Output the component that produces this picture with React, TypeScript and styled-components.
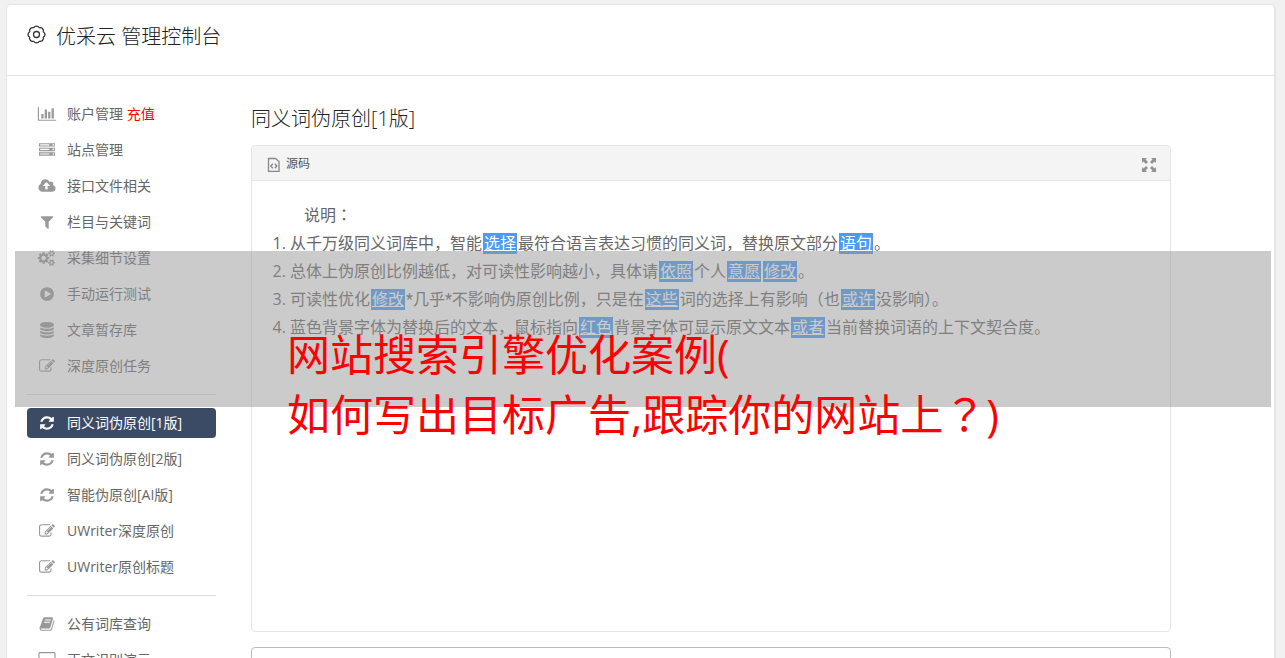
import React from "react";
import styled, { createGlobalStyle, css } from "styled-components";

const latinFirst = '"Open Sans", "Noto Sans CJK SC", sans-serif';

const GlobalStyle = createGlobalStyle`
  *, *::before, *::after { box-sizing: border-box; }
  html, body { margin: 0; height: 100%; }
  body {
    background: #f1f1f1;
    color: #555;
    font-family: ${latinFirst};
    font-size: 14px;
    overflow: hidden;
  }
  #root { height: 100%; }
`;

const Page = styled.div`
  position: relative;
  min-height: 100%;
  padding: 4px 9px 0 6px;
`;

const Card = styled.div`
  background: #fff;
  border: 1px solid #e5e5e5;
  border-right-width: 2px;
  border-bottom: 0;
  border-radius: 5px 5px 0 0;
`;

const Header = styled.header`
  display: flex;
  align-items: flex-start;
  gap: 10px;
  height: 71px;
  padding: 16px 20px;
  border-bottom: 1px solid #e5e5e5;
  color: #222;
`;

const HeaderTitle = styled.h1`
  margin: 0;
  font-size: 20px;
  line-height: 32px;
  font-weight: 300;
`;

const GearIcon = styled.svg`
  width: 19px;
  height: 19px;
  margin-top: 4px;
  fill: none;
  stroke: #333;
`;

const Body = styled.div`
  display: flex;
  align-items: flex-start;
  gap: 35px;
  padding: 23px 20px 0;
`;

const Sidebar = styled.nav`
  flex: 0 0 189px;
`;

const NavList = styled.ul`
  list-style: none;
  margin: 0;
  padding: 0;
  display: flex;
  flex-direction: column;
  gap: 6px;

  & + & {
    margin-top: 13px;
    padding-top: 13px;
    border-top: 1px solid #ddd;
  }
`;

const NavLink = styled.a<{ $active?: boolean }>`
  display: flex;
  align-items: center;
  height: 30px;
  border-radius: 4px;
  padding-left: 10px;
  gap: 10px;
  color: #666;
  font-size: 14px;
  line-height: 30px;
  text-decoration: none;
  white-space: nowrap;
  ${(p) =>
    p.$active &&
    css`
      background: #3b4b66;
      color: #fff;
    `}
`;

const NavIcon = styled.svg<{ $active?: boolean }>`
  flex: 0 0 20px;
  height: 16px;
  fill: ${(p) => (p.$active ? "#fff" : "#999")};
`;

const Recharge = styled.span`
  color: #f00;
`;

const Main = styled.main`
  flex: 0 1 920px;
  min-width: 0;
`;

const PageTitle = styled.h2`
  margin: 5px 0 11px;
  color: #222;
  font-size: 20px;
  line-height: 30px;
  font-weight: 300;
`;

const Editor = styled.section`
  border: 1px solid #e5e5e5;
  border-radius: 4px;
`;

const Toolbar = styled.div`
  display: flex;
  justify-content: space-between;
  align-items: center;
  height: 35px;
  padding: 2px 13px 0 15px;
  border-bottom: 1px solid #e5e5e5;
  border-radius: 4px 4px 0 0;
  background: #f4f4f4;
`;

const ToolButton = styled.button`
  display: flex;
  align-items: center;
  gap: 5px;
  padding: 0;
  border: 0;
  background: none;
  color: #555;
  font-family: ${latinFirst};
  font-size: 12px;
  line-height: 20px;
`;

const ToolIcon = styled.svg`
  width: 14px;
  height: 16px;
  fill: none;
  stroke: #888;
`;

const ExpandIcon = styled.svg`
  width: 16px;
  height: 16px;
  fill: #919191;
`;

const EditorText = styled.div`
  min-height: 450px;
  padding: 20px;
  color: #666;
  font-size: 16px;
  line-height: 28px;
`;

const Intro = styled.p`
  margin: 0;
  text-indent: 32px;
`;

const Rules = styled.ol`
  margin: 0;
  padding-left: 18px;
`;

const Swap = styled.span`
  display: inline-block;
  margin: 0 1px;
  padding: 0 1px;
  line-height: 21px;
  background: #4a9bf5;
  color: #fff;
  text-decoration: underline;
`;

const CenteredMark = styled.span`
  font-family: "Noto Sans CJK JP", sans-serif;
  line-height: 1;
`;

const Star = styled.span`
  font-family: Roboto, sans-serif;
  line-height: 1;
`;

const Result = styled.textarea`
  display: block;
  width: 100%;
  height: 120px;
  margin-top: 15px;
  border: 1px solid #bbb;
  border-radius: 4px;
  background: #fff;
  resize: none;
`;

const Banner = styled.div`
  position: absolute;
  top: 251px;
  left: 15px;
  right: 14px;
  height: 156px;
  padding: 74px 0 0 272px;
  background: rgba(151, 151, 151, 0.5);
  color: #f00;
  font-size: 43px;
  line-height: 60px;
  white-space: nowrap;
`;

type Glyph = { box: string; d: string };

const smallCog = (y: number) =>
  `M1856 ${y}v140q0 16-149 31-12 27-30 52 51 113 51 138 0 4-4 7-122 71-124 71-8 0-46-47t-52-68q-20 2-30 2t-30-2q-14 21-52 68t-46 47q-2 0-124-71-4-3-4-7 0-25 51-138-18-25-30-52-149-15-149-31v-140q0-16 149-31 13-29 30-52-51-113-51-138 0-4 4-7 4-2 35-20t59-34 30-16q8 0 46 46.500t52 67.500q20-2 30-2t30 2q51-71 92-112l6-2q4 0 124 70 4 3 4 7 0 25-51 138 17 23 30 52 149 15 149 31z`;

const glyphs: Record<string, Glyph> = {
  chart: {
    box: "0 0 2048 1792",
    d: "M640 896v512h-256v-512h256zM1024 384v1024h-256v-1024h256zM2048 1536v128h-2048v-1536h128v1408h1920zM1408 640v768h-256v-768h256zM1792 256v1152h-256v-1152h256z",
  },
  server: {
    box: "0 0 1792 1792",
    d: "M128 1408h1024v-128h-1024v128zm0-512h1024v-128h-1024v128zm1568 448q0-40-28-68t-68-28-68 28-28 68 28 68 68 28 68-28 28-68zm-1568-960h1024v-128h-1024v128zm1568 448q0-40-28-68t-68-28-68 28-28 68 28 68 68 28 68-28 28-68zm0-512q0-40-28-68t-68-28-68 28-28 68 28 68 68 28 68-28 28-68zm96 832v384h-1792v-384h1792zm0-512v384h-1792v-384h1792zm0-512v384h-1792v-384h1792z",
  },
  cloud: {
    box: "0 0 2048 1792",
    d: "M1344 864q0-14-9-23l-352-352q-9-9-23-9t-23 9l-351 351q-10 12-10 24 0 14 9 23t23 9h224v352q0 13 9.500 22.500t22.500 9.500h192q13 0 22.500-9.500t9.500-22.500v-352h224q13 0 22.500-9.500t9.500-22.500zm640 288q0 159-112.500 271.500t-271.500 112.500h-1088q-185 0-316.500-131.500t-131.500-316.500q0-130 70-240t188-165q-2-30-2-43 0-212 150-362t362-150q156 0 285.500 87t188.500 231q71-62 166-62 106 0 181 75t75 181q0 76-41 138 130 31 213.500 135.500t83.500 238.500z",
  },
  filter: {
    box: "0 0 1792 1792",
    d: "M1595 295q17 41-14 70l-493 493v742q0 42-39 59-13 5-25 5-27 0-45-19l-256-256q-19-19-19-45v-486l-493-493q-31-29-14-70 17-39 59-39h1280q42 0 59 39z",
  },
  cogs: {
    box: "-64 0 2048 1792",
    d:
      "M832 896q0-106-75-181t-181-75-181 75-75 181 75 181 181 75 181-75 75-181zm768 512q0-52-38-90t-90-38-90 38-38 90q0 53 37.500 90.500t90.500 37.500 90.500-37.500 37.500-90.500zm0-1024q0-52-38-90t-90-38-90 38-38 90q0 53 37.500 90.500t90.500 37.500 90.500-37.500 37.500-90.500zm-384 421v185q0 10-7 19.500t-16 10.500l-155 24q-11 35-32 76 34 48 90 115 7 11 7 20 0 12-7 19-23 30-82.500 89.500t-78.500 59.500q-11 0-21-7l-115-90q-37 19-77 31-11 108-23 155-7 24-30 24h-186q-11 0-20-7.500t-10-17.500l-23-153q-34-10-75-31l-118 89q-7 7-20 7-11 0-21-8-144-133-144-160 0-9 7-19 10-14 41-53t47-61q-23-44-35-82l-152-24q-10-1-17-9.500t-7-19.500v-185q0-10 7-19.500t16-10.500l155-24q11-35 32-76-34-48-90-115-7-11-7-20 0-12 7-20 22-30 82-89t79-59q11 0 21 7l115 90q34-18 77-32 11-108 23-154 7-24 30-24h186q11 0 20 7.500t10 17.500l23 153q34 10 75 31l118-89q8-7 20-7 11 0 21 8 144 133 144 160 0 8-7 19-12 16-42 54t-45 60q23 48 34 82l152 23q10 2 17 10.500t7 19.500z" +
      smallCog(1338) +
      smallCog(314),
  },
  play: {
    box: "0 0 1792 1792",
    d: "M896 128q209 0 385.500 103t279.500 279.500 103 385.500-103 385.500-279.500 279.500-385.500 103-385.500-103-279.500-279.500-103-385.500 103-385.500 279.500-279.500 385.500-103zm384 823q32-18 32-55t-32-55l-544-320q-31-19-64-1-32 19-32 56v640q0 37 32 56 16 8 32 8 17 0 32-9z",
  },
  database: {
    box: "0 0 1792 1792",
    d: "M896 768q237 0 443-43t325-127v170q0 69-103 128t-280 93.500-385 34.500-385-34.500-280-93.500-103-128v-170q119 84 325 127t443 43zm0 768q237 0 443-43t325-127v170q0 69-103 128t-280 93.500-385 34.500-385-34.500-280-93.500-103-128v-170q119 84 325 127t443 43zm0-384q237 0 443-43t325-127v170q0 69-103 128t-280 93.500-385 34.500-385-34.500-280-93.500-103-128v-170q119 84 325 127t443 43zm0-1152q208 0 385 34.500t280 93.500 103 128v128q0 69-103 128t-280 93.500-385 34.500-385-34.500-280-93.500-103-128v-128q0-69 103-128t280-93.500 385-34.500z",
  },
  edit: {
    box: "0 0 1792 1792",
    d: "M888 1184l116-116-152-152-116 116v56h96v96h56zm440-720q-16-16-33 1l-350 350q-17 17-1 33t33-1l350-350q17-17 1-33zm80 594v190q0 119-84.500 203.500t-203.500 84.500h-832q-119 0-203.500-84.500t-84.500-203.500v-832q0-119 84.500-203.500t203.500-84.500h832q63 0 117 25 15 7 18 23 3 17-9 29l-49 49q-14 14-32 8-23-6-45-6h-832q-66 0-113 47t-47 113v832q0 66 47 113t113 47h832q66 0 113-47t47-113v-126q0-13 9-22l64-64q15-15 35-7t20 29zm-96-738l288 288-672 672h-288v-288zm444 132l-92 92-288-288 92-92q28-28 68-28t68 28l152 152q28 28 28 68t-28 68z",
  },
  refresh: {
    box: "0 0 1792 1792",
    d: "M1639 1056q0 5-1 7-64 268-268 434.500t-478 166.500q-146 0-282.500-55t-243.500-157l-129 129q-19 19-45 19t-45-19-19-45v-448q0-26 19-45t45-19h448q26 0 45 19t19 45-19 45l-137 137q71 66 161 102t187 36q134 0 250-65t186-179q11-17 53-117 8-23 30-23h192q13 0 22.500 9.500t9.500 22.500zm25-800v448q0 26-19 45t-45 19h-448q-26 0-45-19t-19-45 19-45l138-138q-148-137-349-137-134 0-250 65t-186 179q-11 17-53 117-8 23-30 23h-199q-13 0-22.500-9.500t-9.500-22.500v-7q65-268 270-434.500t480-166.500q146 0 284 55.500t245 156.500l130-129q19-19 45-19t45 19 19 45z",
  },
  book: {
    box: "0 0 1792 1792",
    d: "M1703 478q40 57 18 129l-275 906q-19 64-76.500 107.500t-122.500 43.500h-923q-77 0-148.500-53.500t-99.500-131.500q-24-67-2-127 0-4 3-27t4-37q1-8-3-21.500t-3-19.500q2-11 8-21t16.500-23.500 16.500-23.500q23-38 45-91.500t30-91.500q3-10 .5-30t-.5-28q3-11 17-28t17-23q21-36 42-92t25-90q1-9-2.500-32t.5-28q4-13 22-30.500t22-22.500q19-26 42.500-84.500t27.500-96.500q1-8-3-25.500t-2-26.500q2-8 9-18t18-23 17-21q8-12 16.500-30.500t15-35 16-36 19.500-32 26.500-23.500 36-11.500 47.500 5.500l-1 3q38-9 51-9h761q74 0 114 56t18 130l-274 906q-36 119-71.500 153.500t-128.500 34.500h-869q-27 0-38 15-11 16-1 43 24 70 144 70h923q29 0 56-15.500t35-41.500l300-987q7-22 5-57 38 15 59 43zm-1064 2q-4 13 2 22.500t20 9.500h608q13 0 25.500-9.500t16.500-22.500l21-64q4-13-2-22.500t-20-9.500h-608q-13 0-25.500 9.500t-16.500 22.500zm-83 256q-4 13 2 22.500t20 9.500h608q13 0 25.500-9.500t16.500-22.500l21-64q4-13-2-22.500t-20-9.500h-608q-13 0-25.500 9.500t-16.500 22.500z",
  },
  desktop: {
    box: "0 0 1920 1792",
    d: "M1792 992v-832q0-13-9.500-22.500t-22.500-9.500h-1600q-13 0-22.500 9.500t-9.500 22.500v832q0 13 9.500 22.500t22.500 9.500h1600q13 0 22.500-9.500t9.500-22.500zm128-832v1088q0 66-47 113t-113 47h-544q0 37 16 77.500t32 71 16 43.500q0 26-19 45t-45 19h-512q-26 0-45-19t-19-45q0-14 16-44t32-70 16-78h-544q-66 0-113-47t-47-113v-1088q0-66 47-113t113-47h1600q66 0 113 47t47 113z",
  },
};

type Item = { icon: string; label: string; note?: string; active?: boolean };

const groups: Item[][] = [
  [
    { icon: "chart", label: "账户管理", note: "充值" },
    { icon: "server", label: "站点管理" },
    { icon: "cloud", label: "接口文件相关" },
    { icon: "filter", label: "栏目与关键词" },
    { icon: "cogs", label: "采集细节设置" },
    { icon: "play", label: "手动运行测试" },
    { icon: "database", label: "文章暂存库" },
    { icon: "edit", label: "深度原创任务" },
  ],
  [
    { icon: "refresh", label: "同义词伪原创[1版]", active: true },
    { icon: "refresh", label: "同义词伪原创[2版]" },
    { icon: "refresh", label: "智能伪原创[AI版]" },
    { icon: "edit", label: "UWriter深度原创" },
    { icon: "edit", label: "UWriter原创标题" },
  ],
  [
    { icon: "book", label: "公有词库查询" },
    { icon: "desktop", label: "正文识别演示" },
  ],
];

export default function App() {
  return (
    <>
      <GlobalStyle />
      <Page>
        <Card>
          <Header>
            <GearIcon viewBox="0 0 19 19" aria-hidden="true">
              <circle cx="9.5" cy="9.5" r="3" strokeWidth="1.3" />
              <path
                strokeWidth="1.3"
                strokeLinejoin="round"
                d="M16.300 6.700A3.200 3.200 0 0 0 12.300 2.700A3.200 3.200 0 0 0 6.700 2.700A3.200 3.200 0 0 0 2.700 6.700A3.200 3.200 0 0 0 2.700 12.300A3.200 3.200 0 0 0 6.700 16.300A3.200 3.200 0 0 0 12.300 16.300A3.200 3.200 0 0 0 16.300 12.300A3.200 3.200 0 0 0 16.300 6.700z"
              />
            </GearIcon>
            <HeaderTitle>优采云 管理控制台</HeaderTitle>
          </Header>
          <Body>
            <Sidebar>
              {groups.map((items, i) => (
                <NavList key={i}>
                  {items.map((item) => (
                    <li key={item.label}>
                      <NavLink href="#" $active={item.active}>
                        <NavIcon
                          viewBox={glyphs[item.icon].box}
                          $active={item.active}
                          aria-hidden="true"
                        >
                          <path fillRule="evenodd" d={glyphs[item.icon].d} />
                        </NavIcon>
                        <span>
                          {item.label}
                          {item.note && <Recharge> {item.note}</Recharge>}
                        </span>
                      </NavLink>
                    </li>
                  ))}
                </NavList>
              ))}
            </Sidebar>
            <Main>
              <PageTitle>同义词伪原创[1版]</PageTitle>
              <Editor>
                <Toolbar>
                  <ToolButton type="button">
                    <ToolIcon viewBox="0 0 14 16" aria-hidden="true">
                      <path d="M1.500 2.500h7l3.500 3v10h-10.500z" strokeWidth="1.3" />
                      <path d="M5.800 7.800L3.800 10l2 2.200M7.800 7.800l2 2.200-2 2.200" strokeWidth="1.4" />
                    </ToolIcon>
                    源码
                  </ToolButton>
                  <ToolButton type="button" aria-label="全屏">
                    <ExpandIcon viewBox="0 0 16 16" aria-hidden="true">
                      <path d="M1 2h5L4.500 3.500l2.500 2.500L5 8 2.500 5.500 1 7zM15 2v5l-1.500-1.500L11 8 9 6l2.500-2.500L10 2zM1 16v-5l1.500 1.500L5 10l2 2-2.500 2.500L6 16zM15 16h-5l1.500-1.500L9 12l2-2 2.500 2.500L15 11z" />
                    </ExpandIcon>
                  </ToolButton>
                </Toolbar>
                <EditorText>
                  <Intro>
                    说明<CenteredMark>：</CenteredMark>
                  </Intro>
                  <Rules>
                    <li>
                      从千万级同义词库中，智能<Swap>选择</Swap>最符合语言表达习惯的同义词，替换原文部分<Swap>语句</Swap>。
                    </li>
                    <li>
                      总体上伪原创比例越低，对可读性影响越小，具体请<Swap>依照</Swap>个人<Swap>意愿</Swap><Swap>修改</Swap>。
                    </li>
                    <li>
                      可读性优化<Swap>修改</Swap><Star>*</Star>几乎<Star>*</Star>不影响伪原创比例，只是在<Swap>这些</Swap>词的选择上有影响（也<Swap>或许</Swap>没影响）。
                    </li>
                    <li>
                      蓝色背景字体为替换后的文本，鼠标指向<Swap>红色</Swap>背景字体可显示原文文本<Swap>或者</Swap>当前替换词语的上下文契合度。
                    </li>
                  </Rules>
                </EditorText>
              </Editor>
              <Result aria-label="结果" />
            </Main>
          </Body>
        </Card>
        <Banner>
          网站搜索引擎优化案例(
          <br />
          如何写出目标广告,跟踪你的网站上<CenteredMark>？</CenteredMark>)
        </Banner>
      </Page>
    </>
  );
}
